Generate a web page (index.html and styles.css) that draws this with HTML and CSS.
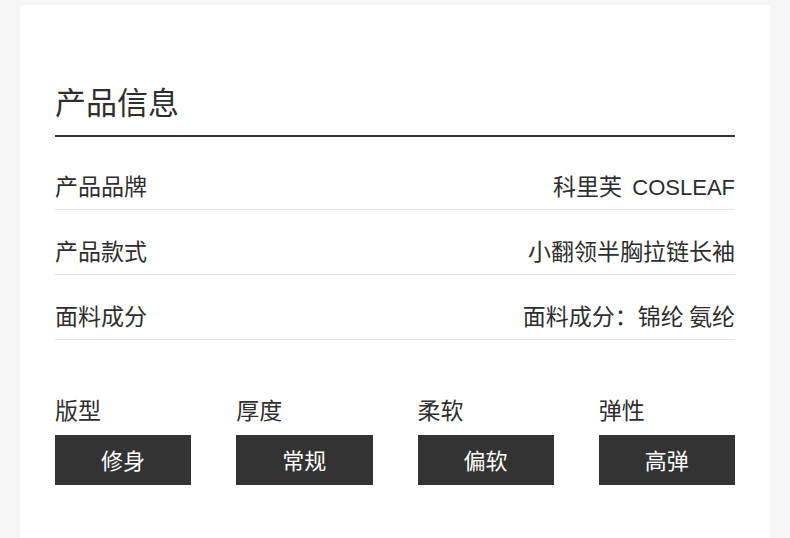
FILE: index.html
```html
<!DOCTYPE html>
<html lang="zh-CN">
<head>
<meta charset="utf-8">
<title>产品信息</title>
<link rel="stylesheet" href="styles.css">
</head>
<body>
<div class="card">
  <h1 class="title">产品信息</h1>
  <div class="rows">
    <div class="row"><span class="label">产品品牌</span><span class="value">科里芙&nbsp;&nbsp;<span class="latin">COSLEAF</span></span></div>
    <div class="row"><span class="label">产品款式</span><span class="value">小翻领半胸拉链长袖</span></div>
    <div class="row"><span class="label">面料成分</span><span class="value">面料成分：锦纶 氨纶</span></div>
  </div>
  <div class="attrs">
    <div class="attr"><div class="attr-name">版型</div><div class="attr-box">修身</div></div>
    <div class="attr"><div class="attr-name">厚度</div><div class="attr-box">常规</div></div>
    <div class="attr"><div class="attr-name">柔软</div><div class="attr-box">偏软</div></div>
    <div class="attr"><div class="attr-name">弹性</div><div class="attr-box">高弹</div></div>
  </div>
</div>
</body>
</html>
```
FILE: styles.css
```css
html, body {
  margin: 0;
  padding: 0;
  background: #f5f5f5;
}
body {
  font-family: "Noto Sans CJK SC", "Noto Sans", sans-serif;
  color: #2e2e2e;
}
.card {
  margin: 5px 20px 0;
  background: #fff;
  padding: 0 35px;
  height: 533px;
  box-sizing: border-box;
}
.title {
  margin: 0;
  padding: 76px 0 14px;
  font-size: 31px;
  line-height: 40px;
  font-weight: normal;
  border-bottom: 2px solid #333;
}
.rows {
  padding-top: 8px;
}
.row {
  display: flex;
  justify-content: space-between;
  align-items: center;
  height: 30px;
  padding: 25px 0 9px;
  line-height: 30px;
  font-size: 23px;
  border-bottom: 1px solid #e2e2e2;
}
.latin {
  font-family: "Liberation Sans", "Noto Sans", sans-serif;
  font-size: 22px;
  line-height: 1;
}
.attrs {
  display: grid;
  grid-template-columns: repeat(4, 1fr);
  column-gap: 45px;
  margin-top: 54px;
}
.attr-name {
  font-size: 23px;
  line-height: 30px;
  margin-bottom: 11px;
}
.attr-box {
  height: 50px;
  line-height: 48px;
  background: #333;
  color: #fff;
  text-align: center;
  font-size: 22px;
}
```
